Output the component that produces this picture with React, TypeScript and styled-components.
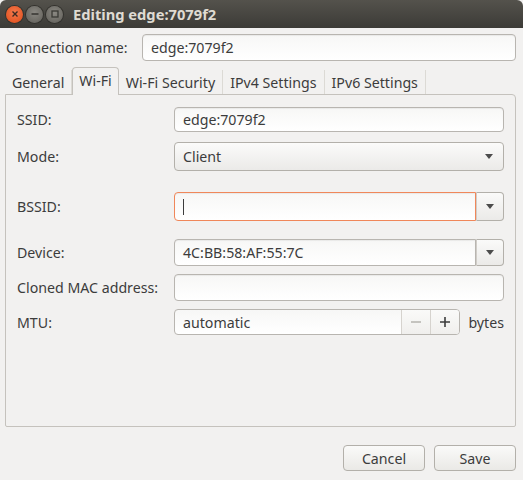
import React from 'react';
import styled, { createGlobalStyle } from 'styled-components';

const Global = createGlobalStyle`
  html, body {
    margin: 0;
    padding: 0;
    background: #f2f1f0;
  }
  body {
    font-family: "Noto Sans", "DejaVu Sans", sans-serif;
    font-size: 14.2px;
    color: #3c3c3c;
  }
`;

const Window = styled.div`
  width: 523px;
  height: 480px;
  background: #f2f1f0;
  display: flex;
  flex-direction: column;
  overflow: hidden;
`;

const TitleBar = styled.div`
  height: 28px;
  flex: none;
  display: flex;
  align-items: center;
  padding-left: 6px;
  background: linear-gradient(#54524c, #3c3b37);
  border-radius: 6px 6px 0 0;
`;

const WinButton = styled.span<{ $close?: boolean }>`
  width: 17px;
  height: 17px;
  border-radius: 50%;
  margin-right: 3px;
  display: flex;
  align-items: center;
  justify-content: center;
  background: ${(p) =>
    p.$close
      ? 'radial-gradient(circle at 50% 40%, #f47a4e, #df4a16)'
      : 'radial-gradient(circle at 50% 40%, #8a8882, #5f5d57)'};
  box-shadow: 0 0 0 1px #33322e;
`;

const Title = styled.span`
  margin-left: 7px;
  color: #dfdbd2;
  font-weight: bold;
  font-size: 14.7px;
`;

const Body = styled.div`
  padding: 6px 7px 0 5px;
  display: flex;
  flex-direction: column;
  flex: 1;
`;

const NameRow = styled.div`
  display: flex;
  align-items: center;
  padding-left: 1px;
`;

const NameLabel = styled.span`
  width: 136px;
`;

const Entry = styled.div<{ $focus?: boolean; $joined?: boolean }>`
  flex: 1;
  height: 27px;
  box-sizing: border-box;
  display: flex;
  align-items: center;
  padding-left: 8px;
  background: linear-gradient(#f7f7f6, #ffffff);
  border: 1px solid ${(p) => (p.$focus ? '#f0875a' : '#b8b5b0')};
  border-radius: ${(p) => (p.$joined ? '4px 0 0 4px' : '4px')};
  box-shadow: inset 0 1px 1px rgba(0, 0, 0, 0.06);
`;

const Caret = styled.span`
  width: 1px;
  height: 16px;
  background: #3c3c3c;
`;

const Tabs = styled.div`
  margin-top: 7px;
  height: 26px;
  display: flex;
  align-items: flex-end;
  position: relative;
  z-index: 1;
`;

const Tab = styled.div<{ $active?: boolean }>`
  box-sizing: border-box;
  height: 24px;
  padding: 0 7px;
  display: flex;
  align-items: center;
  border-right: 1px solid #dcdad5;
  ${(p) =>
    p.$active &&
    `
    border: 1px solid #c5c2bd;
    border-bottom: none;
    border-radius: 4px 4px 0 0;
    background: #f2f1f0;
    margin-bottom: -1px;
    padding: 0 6px 2px;
    height: 28px;
  `}
`;

const Panel = styled.div`
  height: 333px;
  box-sizing: border-box;
  border: 1px solid #c5c2bd;
  border-radius: 0 4px 2px 2px;
  padding: 12px 11px 0 11px;
  display: flex;
  flex-direction: column;
`;

const Row = styled.div<{ $top: number; $h: number }>`
  margin-top: ${(p) => p.$top}px;
  height: ${(p) => p.$h}px;
  display: flex;
  align-items: center;
`;

const Label = styled.span`
  width: 157px;
  flex: none;
`;

const Field = styled.div`
  flex: 1;
  height: 100%;
  display: flex;
`;

const FieldEntry = styled(Entry)`
  height: 100%;
`;

const Combo = styled.div`
  flex: 1;
  height: 100%;
  box-sizing: border-box;
  display: flex;
  align-items: center;
  justify-content: space-between;
  padding: 0 10px 0 8px;
  background: linear-gradient(#fbfbfa, #ebeae8);
  border: 1px solid #b3b0aa;
  border-radius: 4px;
`;

const ArrowButton = styled.div`
  width: 28px;
  flex: none;
  box-sizing: border-box;
  display: flex;
  align-items: center;
  justify-content: center;
  background: linear-gradient(#fafaf9, #ebeae8);
  border: 1px solid #b3b0aa;
  border-left: 1px solid #d0cdc8;
  border-radius: 0 4px 4px 0;
`;

const Arrow = styled.span`
  width: 0;
  height: 0;
  border-left: 4.5px solid transparent;
  border-right: 4.5px solid transparent;
  border-top: 5px solid #4c4c4c;
`;

const SpinWrap = styled.div`
  width: 287px;
  height: 100%;
  box-sizing: border-box;
  display: flex;
  border: 1px solid #b8b5b0;
  border-radius: 4px;
  background: linear-gradient(#f7f7f6, #ffffff);
  overflow: hidden;
`;

const SpinText = styled.span`
  flex: 1;
  display: flex;
  align-items: center;
  padding-left: 8px;
`;

const SpinButton = styled.span`
  width: 28px;
  display: flex;
  align-items: center;
  justify-content: center;
  border-left: 1px solid #d6d3ce;
  background: linear-gradient(#fafaf9, #f0efed);
`;

const Unit = styled.span`
  margin-left: 8px;
`;

const Footer = styled.div`
  margin-top: 18px;
  display: flex;
  justify-content: flex-end;
  gap: 9px;
`;

const Button = styled.button`
  width: 82px;
  height: 26px;
  font: inherit;
  color: #3c3c3c;
  background: linear-gradient(#fafaf9, #eae9e6);
  border: 1px solid #b3b0aa;
  border-radius: 4px;
  padding: 0;
`;

const Glyph = ({ kind }: { kind: 'close' | 'min' | 'max' }) => (
  <svg width="10" height="10" viewBox="0 0 10 10">
    {kind === 'close' && (
      <path d="M2.5 2.5 L7.5 7.5 M7.5 2.5 L2.5 7.5" stroke="#3c2a22" strokeWidth="1.4" />
    )}
    {kind === 'min' && <path d="M1.5 5 H8.5" stroke="#3a3935" strokeWidth="1.6" />}
    {kind === 'max' && (
      <rect x="2" y="2" width="6" height="6" fill="none" stroke="#3a3935" strokeWidth="1.3" />
    )}
  </svg>
);

const SpinGlyph = ({ plus, dim }: { plus?: boolean; dim?: boolean }) => (
  <svg width="12" height="12" viewBox="0 0 12 12">
    <path
      d={plus ? 'M1 6 H11 M6 1 V11' : 'M1 6 H11'}
      stroke={dim ? '#b5b3ae' : '#3c3c3c'}
      strokeWidth="1.6"
    />
  </svg>
);

export default function App() {
  return (
    <Window>
      <Global />
      <TitleBar>
        <WinButton $close>
          <Glyph kind="close" />
        </WinButton>
        <WinButton>
          <Glyph kind="min" />
        </WinButton>
        <WinButton>
          <Glyph kind="max" />
        </WinButton>
        <Title>Editing edge:7079f2</Title>
      </TitleBar>
      <Body>
        <NameRow>
          <NameLabel>Connection name:</NameLabel>
          <Entry>edge:7079f2</Entry>
        </NameRow>
        <Tabs>
          <Tab>General</Tab>
          <Tab $active>Wi-Fi</Tab>
          <Tab>Wi-Fi Security</Tab>
          <Tab>IPv4 Settings</Tab>
          <Tab>IPv6 Settings</Tab>
        </Tabs>
        <Panel>
          <Row $top={0} $h={25}>
            <Label>SSID:</Label>
            <Field>
              <FieldEntry>edge:7079f2</FieldEntry>
            </Field>
          </Row>
          <Row $top={10} $h={29}>
            <Label>Mode:</Label>
            <Combo>
              Client
              <Arrow />
            </Combo>
          </Row>
          <Row $top={21} $h={29}>
            <Label>BSSID:</Label>
            <Field>
              <FieldEntry $focus $joined>
                <Caret />
              </FieldEntry>
              <ArrowButton>
                <Arrow />
              </ArrowButton>
            </Field>
          </Row>
          <Row $top={18} $h={27}>
            <Label>Device:</Label>
            <Field>
              <FieldEntry $joined>4C:BB:58:AF:55:7C</FieldEntry>
              <ArrowButton>
                <Arrow />
              </ArrowButton>
            </Field>
          </Row>
          <Row $top={8} $h={27}>
            <Label>Cloned MAC address:</Label>
            <Field>
              <FieldEntry />
            </Field>
          </Row>
          <Row $top={8} $h={26}>
            <Label>MTU:</Label>
            <SpinWrap>
              <SpinText>automatic</SpinText>
              <SpinButton>
                <SpinGlyph dim />
              </SpinButton>
              <SpinButton>
                <SpinGlyph plus />
              </SpinButton>
            </SpinWrap>
            <Unit>bytes</Unit>
          </Row>
        </Panel>
        <Footer>
          <Button>Cancel</Button>
          <Button>Save</Button>
        </Footer>
      </Body>
    </Window>
  );
}
